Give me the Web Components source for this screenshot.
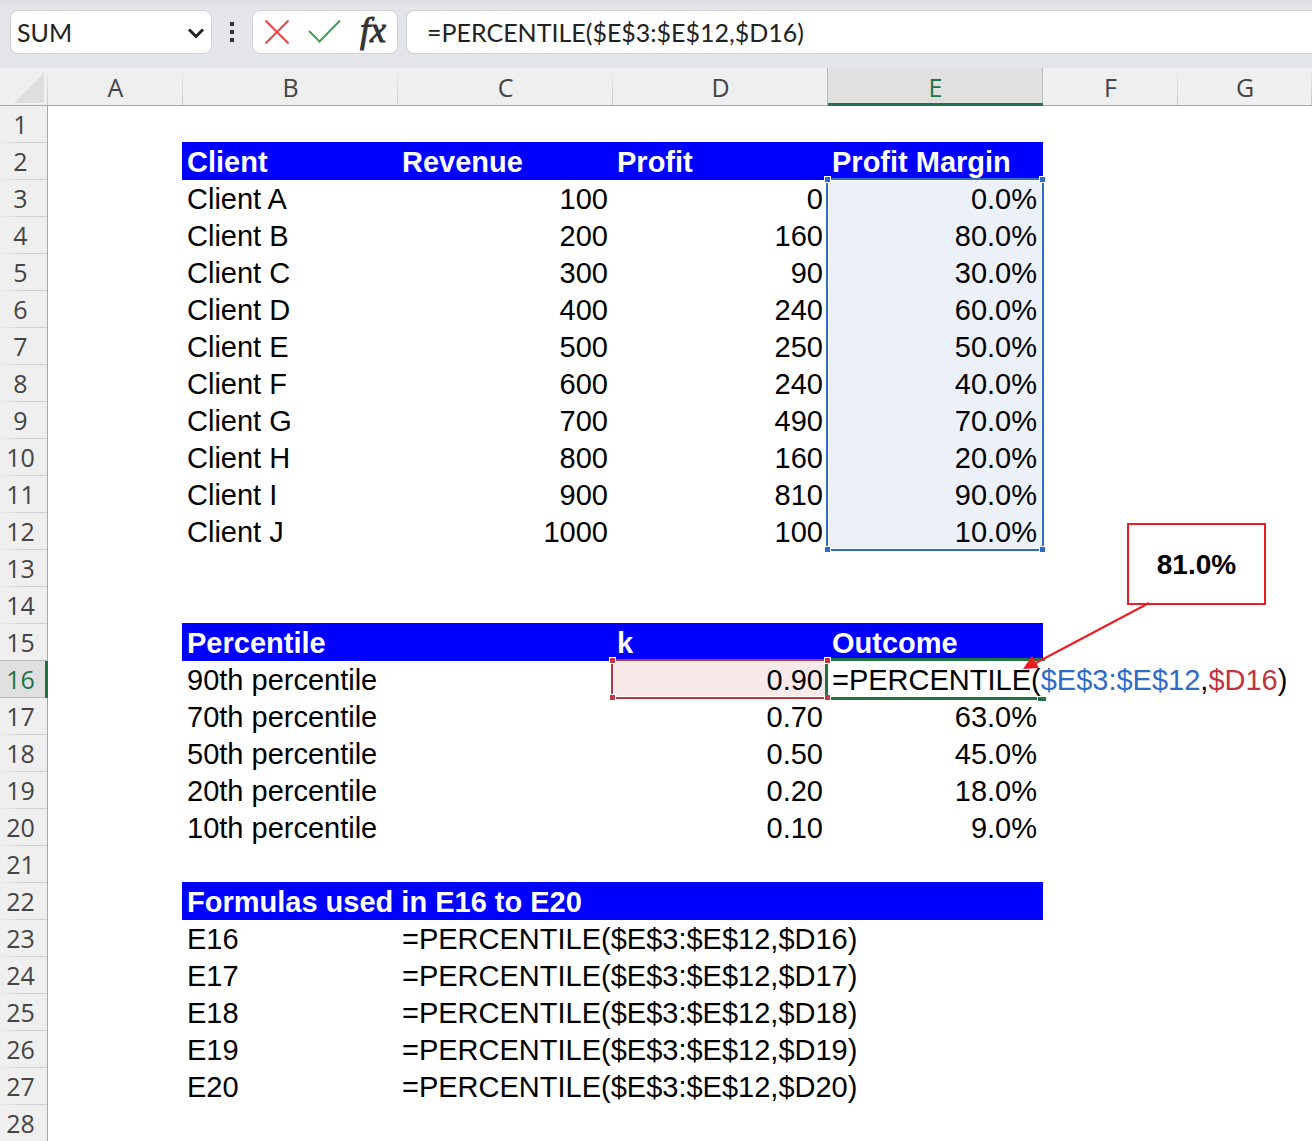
<!DOCTYPE html>
<html lang="en">
<head>
<meta charset="utf-8">
<title>Percentile worksheet</title>
<style>
  html, body { margin: 0; height: 100%; background: #fff; }
  body { overflow: hidden; font-family: "Liberation Sans", Arial, sans-serif; color: #000; }
</style>
</head>
<body>
<sheet-app></sheet-app>
<script>
const define = (name, html, setup) => {
  const template = document.createElement("template");
  template.innerHTML = html;
  customElements.define(name, class extends HTMLElement {
    constructor() {
      super();
      this.attachShadow({ mode: "open" }).append(template.content.cloneNode(true));
      if (setup) setup(this.shadowRoot, this);
    }
  });
};

/* Name box: current name with a drop-down arrow */
define("name-box", `
  <style>
    :host { display: flex; align-items: center; box-sizing: border-box; width: 202px; height: 44px;
      background: #fff; border: 1px solid #d0d1d5; border-radius: 8px; padding: 0 6px; }
    input { flex: 1; min-width: 0; border: 0; padding: 0; background: none; outline: 0; color: #222;
      font: 25px/42px Lato, sans-serif; }
    button { border: 0; background: none; padding: 2px 0 0; width: 18px; height: 40px; }
    svg { display: block; margin: auto; }
  </style>
  <input aria-label="Name box" value="SUM">
  <button aria-label="Show names"><svg width="18" height="12" viewBox="0 0 18 12"><path d="M2 2.5 9 9.5 16 2.5" fill="none" stroke="#222" stroke-width="3"/></svg></button>
`);

/* Cancel, enter and insert-function buttons */
define("formula-actions", `
  <style>
    :host { display: flex; align-items: center; justify-content: space-between; box-sizing: border-box;
      width: 146px; height: 44px; background: #fff; border: 1px solid #d0d1d5; border-radius: 8px; padding: 0 8px 0 10px; }
    button { border: 0; background: none; padding: 0; height: 42px; color: #333; }
    svg { display: block; }
    .fx { width: 32px; padding-bottom: 4px; font: italic 36px/36px "Liberation Serif", serif; -webkit-text-stroke: 1px #333; }
  </style>
  <button aria-label="Cancel"><svg width="28" height="28" viewBox="0 0 28 28"><path d="M2.5 2.5 25.500 25.500M25.500 2.500 2.500 25.500" fill="none" stroke="#f04444" stroke-width="2"/></svg></button>
  <button aria-label="Enter"><svg width="34" height="28" viewBox="0 0 34 28"><path d="M2 13 12.500 23.500 33 2.500" fill="none" stroke="#3fa152" stroke-width="2"/></svg></button>
  <button class="fx" aria-label="Insert function">fx</button>
`);

define("formula-bar", `
  <style>
    :host { display: flex; align-items: center; box-sizing: border-box; height: 68px; padding: 0 0 4px 10px;
      background: linear-gradient(#dcdde3, #e4e5ea 8px); overflow: hidden; }
    .dots { flex: none; width: 40px; }
    .dots svg { display: block; margin: auto; }
    name-box, formula-actions { flex: none; }
    input { flex: 1; min-width: 0; box-sizing: border-box; height: 44px; margin: 0 0 0 8px; padding: 0 20px;
      border: 1px solid #d0d1d5; border-right: 0; border-radius: 8px 0 0 8px; background: #fff; outline: 0;
      color: #222; font: 25px/42px Lato, sans-serif; }
  </style>
  <name-box></name-box>
  <span class="dots"><svg width="4" height="20" viewBox="0 0 4 20" fill="#333"><path d="M0 0h4v4H0zM0 8h4v4H0zM0 16h4v4H0z"/></svg></span>
  <formula-actions></formula-actions>
  <input aria-label="Formula" value="=PERCENTILE($E$3:$E$12,$D16)">
`);

/* Outline of a referenced range, anchored on its first cell */
define("range-outline", `
  <style>
    :host { position: absolute; z-index: 1; left: -2px; top: -2px; box-sizing: border-box;
      width: calc(100% + 3px); height: calc(var(--rows, 1) * 100% + 3px);
      border: 2px solid var(--line); pointer-events: none; }
    :host::before { content: ""; position: absolute; inset: 0; border: 1px solid #fff; }
    i { position: absolute; width: 5px; height: 5px; background: var(--line); border: 1px solid #fff; }
    i:nth-of-type(odd) { left: -4px; }
    i:nth-of-type(even) { right: -4px; }
    i:nth-of-type(-n+2) { top: -4px; }
    i:nth-of-type(n+3) { bottom: -4px; }
  </style><i></i><i></i><i></i><i></i>
`);

/* Border of the cell being edited; its left bar sits between the handles of the neighbouring range */
define("edit-outline", `
  <style>
    :host { position: absolute; z-index: 1; left: 3px; top: -3px; box-sizing: border-box;
      width: calc(100% - 1px); height: calc(100% + 5px); border: solid #217346; border-width: 3px 0; }
    :host::before { content: ""; position: absolute; left: -6px; top: 3px; bottom: 2px; width: 3px;
      background: #217346; box-shadow: 1px 0 #fff; }
    i { position: absolute; right: -1px; bottom: -4px; width: 8px; height: 4px; background: #217346; border: solid #fff; border-width: 1px 0 0 1px; }
  </style><i></i>
`);

define("cell-callout", `
  <style>
    :host { position: absolute; z-index: 3; left: 84px; top: 10px; box-sizing: border-box; width: 139px; height: 82px;
      display: flex; align-items: center; justify-content: center; background: #fff; border: 2px solid #ed1c24;
      font-size: 28px; font-weight: bold; }
    svg { position: absolute; right: 112px; top: 76px; }
  </style>
  <slot></slot>
  <svg width="132" height="70" viewBox="0 0 132 70"><path d="M129 2 12 64" stroke="#ed1c24" stroke-width="2"/><path d="M3 68 12 55 19 67Z" fill="#ed1c24"/></svg>
`);

const clients = [["A","100","0","0.0%"],["B","200","160","80.0%"],["C","300","90","30.0%"],["D","400","240","60.0%"],
  ["E","500","250","50.0%"],["F","600","240","40.0%"],["G","700","490","70.0%"],["H","800","160","20.0%"],
  ["I","900","810","90.0%"],["J","1000","100","10.0%"]];
const percentiles = [["90th","0.90",""],["70th","0.70","63.0%"],["50th","0.50","45.0%"],["20th","0.20","18.0%"],["10th","0.10","9.0%"]];

const rows = {
  2: ["Client", "Revenue", "Profit", "Profit Margin"],
  15: ["Percentile", "", "k", "Outcome"],
  22: ["Formulas used in E16 to E20", "", "", ""]
};
clients.forEach(([c, ...v], i) => rows[3 + i] = ["Client " + c, ...v]);
percentiles.forEach(([p, k, o], i) => {
  rows[16 + i] = [p + " percentile", "", k, o];
  rows[23 + i] = ["E" + (16 + i), "=PERCENTILE($E$3:$E$12,$D" + (16 + i) + ")", "", ""];
});
rows[3][3] += `<range-outline class="blue"></range-outline>`;
rows[16][2] += `<range-outline class="red"></range-outline>`;
rows[16][3] = `<edit-outline></edit-outline><span class="edit">=PERCENTILE(<span class="ref1">$E$3:$E$12</span>,<span class="ref2">$D16</span>)</span>`;

define("sheet-grid", `
  <style>
    :host { display: block; font-size: 29px; line-height: 35px; }
    table { width: 100%; table-layout: fixed; border-spacing: 0; border-collapse: separate; }
    col.head { width: 48px; } col.narrow { width: 135px; } col.wide { width: 215px; }
    th, td { box-sizing: border-box; height: 37px; padding: 0; white-space: nowrap; text-align: left; }
    td { padding: 2px 5px 0 4px; }
    th { font: 25px/37px "Open Sans", sans-serif; color: #444; text-align: center; background: #efefef; }
    thead th { height: 38px; padding-top: 2px; line-height: 35px; border-bottom: 1px solid #a6a6a6;
      background: linear-gradient(#efefef, #c8c8c8) right / 1px 100% no-repeat #efefef; }
    thead th.on { border-bottom-color: #217346; color: #217346; background: #e0e0e0;
      box-shadow: inset 0 -2px #217346, inset -1px 0 #b8b8b8, -1px 0 #b8b8b8; }
    tbody th { border-right: 1px solid #a6a6a6; padding-right: 6px;
      background: linear-gradient(90deg, #efefef, #cfcfcf 20px) bottom / 100% 1px no-repeat #efefef; }
    tbody th.on { border-right: 3px solid #217346; padding-right: 4px; color: #217346; background: #e0e0e0;
      box-shadow: inset 0 -1px #b8b8b8, 0 -1px #b8b8b8; }
    .corner svg { display: block; margin: 0 0 0 14px; }
    .num { text-align: right; }
    .pct { padding-right: 6px; }
    .title td { background: #00f; box-shadow: -1px -1px #00f, 0 -1px #00f, -1px 0 #00f; color: #fff; font-weight: bold; }
    .title td:nth-child(2), .title td:nth-child(n+7) { background: none; box-shadow: none; }
    .blue { --line: #2f6bc8; --rows: 10; } .red { --line: #c0353f; }
    .anchor { position: relative; }
    .sum { background: #ebf0f9; } .arg { background: #f9eaea; }
    .edit { position: relative; z-index: 2; display: inline-block; height: 34px; background: #fff; vertical-align: top; }
    .ref1 { color: #2f6bc8; } .ref2 { color: #c0353f; }
  </style>
  <table>
    <colgroup><col class="head"><col class="narrow"><col class="wide"><col class="wide"><col class="wide"><col class="wide"><col class="narrow"><col></colgroup>
    <thead><tr><th class="corner" aria-label="Select all"><svg width="30" height="30" viewBox="0 0 30 30"><path d="M30 0V30H0Z" fill="#dedede"/></svg></th></tr></thead>
    <tbody></tbody>
  </table>
`, root => {
  root.querySelector("thead tr").insertAdjacentHTML("beforeend",
    [..."ABCDEFG"].map(c => `<th scope="col"${c === "E" ? ' class="on"' : ""}>${c}</th>`).join(""));
  let html = "";
  for (let r = 1; r <= 28; r++) {
    const title = [2, 15, 22].includes(r);
    const cells = (rows[r] || ["", "", "", ""]).map((text, c) => {
      const cls = [];
      if (!title && (c > 1 || (c === 1 && r < 23)) && !(r === 16 && c === 3)) cls.push("num");
      if (c === 3 && !title) cls.push("pct");
      if (c === 3 && r > 2 && r < 13) cls.push("sum");
      if (c === 2 && r === 16) cls.push("arg");
      if (text.includes("-outline")) cls.push("anchor");
      return `<td class="${cls.join(" ")}">${text}</td>`;
    }).join("");
    const last = r === 12 ? `<td class="anchor"><cell-callout>81.0%</cell-callout></td>` : "<td></td>";
    html += `<tr${title ? ' class="title"' : ""}><th scope="row"${r === 16 ? ' class="on"' : ""}>${r}</th>` +
      `<td></td>${cells}${last}<td></td></tr>`;
  }
  root.querySelector("tbody").innerHTML = html;
});

define("sheet-app", `
  <style>:host { display: flex; flex-direction: column; height: 100vh; overflow: hidden; } formula-bar, sheet-grid { flex: none; }</style>
  <formula-bar></formula-bar>
  <sheet-grid></sheet-grid>
`);
</script>
</body>
</html>
